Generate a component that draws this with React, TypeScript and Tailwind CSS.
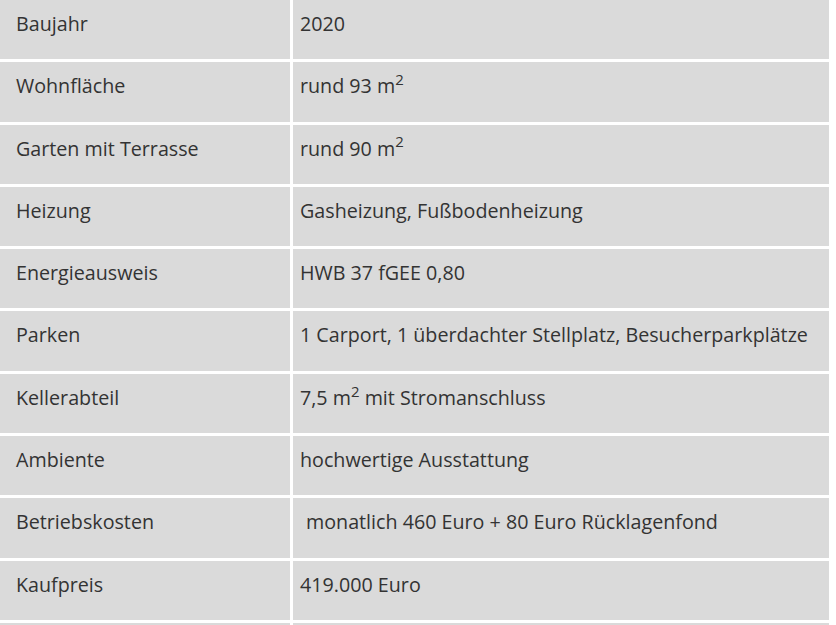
const Sq = () => <sup className="top-[-0.55em] text-[0.76em]">2</sup>;

const rows: [string, React.ReactNode][] = [
  ["Baujahr", "2020"],
  ["Wohnfläche", <>rund 93 m<Sq /></>],
  ["Garten mit Terrasse", <>rund 90 m<Sq /></>],
  ["Heizung", "Gasheizung, Fußbodenheizung"],
  ["Energieausweis", "HWB 37 fGEE 0,80"],
  ["Parken", "1 Carport, 1 überdachter Stellplatz, Besucherparkplätze"],
  ["Kellerabteil", <>7,5 m<Sq /> mit Stromanschluss</>],
  ["Ambiente", "hochwertige Ausstattung"],
  ["Betriebskosten", <span className="pl-[6px]">monatlich 460 Euro + 80 Euro Rücklagenfond</span>],
  ["Kaufpreis", "419.000 Euro"],
];

export default function App() {
  return (
    <div className="h-[625px] w-[836px] overflow-hidden bg-white font-['Open_Sans',sans-serif] text-[19.7px] leading-[28px] text-[#333]">
      <div className="grid w-[829px] grid-cols-[290px_1fr] gap-[3px] bg-white pb-[3px]">
        {rows.map(([label, value], i) => (
          <div key={i} className="contents">
            <div className="h-[59.3px] whitespace-nowrap bg-[#dadada] pl-4 pt-[10px]">{label}</div>
            <div className="h-[59.3px] whitespace-nowrap bg-[#dadada] pl-[7px] pt-[10px]">{value}</div>
          </div>
        ))}
        <div className="h-[10px] bg-[#dadada]" />
        <div className="h-[10px] bg-[#dadada]" />
      </div>
    </div>
  );
}
